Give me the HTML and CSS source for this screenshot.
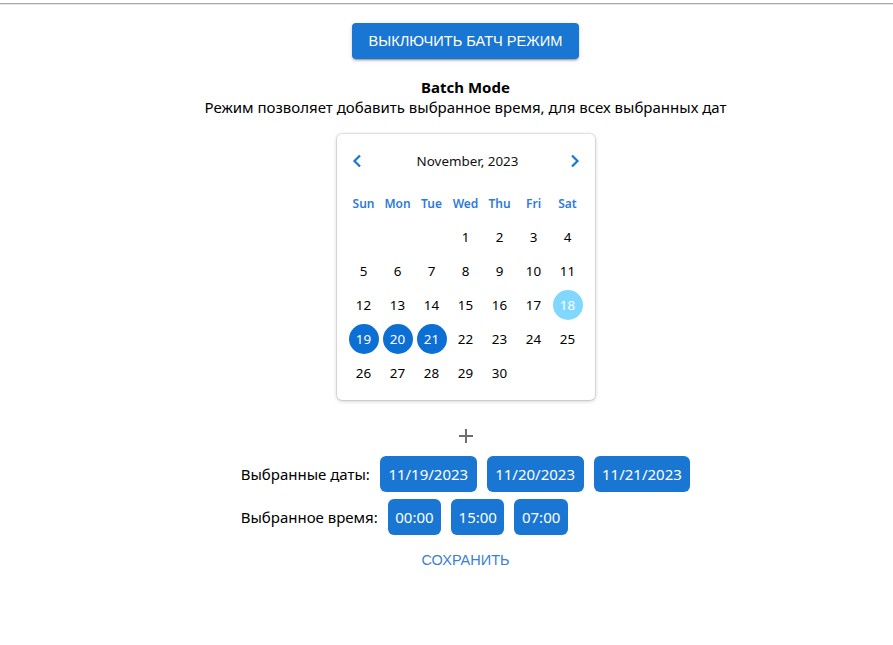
FILE: index.html
```html
<!DOCTYPE html>
<html lang="ru">
<head>
<meta charset="utf-8">
<title>Batch Mode</title>
<link rel="stylesheet" href="styles.css">
</head>
<body>
<div class="topbar"></div>
<main class="page">
  <button class="btn-primary">Выключить батч режим</button>
  <div class="title">Batch Mode</div>
  <div class="subtitle">Режим позволяет добавить выбранное время, для всех выбранных дат</div>

  <div class="calendar">
    <div class="cal-header">
      <button class="nav">
        <svg width="10" height="14" viewBox="0 0 10 14"><path d="M8 1.5 L2.5 7 L8 12.5" fill="none" stroke="#1976d2" stroke-width="2.2"/></svg>
      </button>
      <div class="month">November, 2023</div>
      <button class="nav">
        <svg width="10" height="14" viewBox="0 0 10 14"><path d="M2 1.5 L7.5 7 L2 12.5" fill="none" stroke="#1976d2" stroke-width="2.2"/></svg>
      </button>
    </div>
    <div class="grid weekdays">
      <span>Sun</span><span>Mon</span><span>Tue</span><span>Wed</span><span>Thu</span><span>Fri</span><span>Sat</span>
    </div>
    <div class="grid days">
      <span></span><span></span><span></span>
      <span class="d">1</span><span class="d">2</span><span class="d">3</span><span class="d">4</span>
      <span class="d">5</span><span class="d">6</span><span class="d">7</span><span class="d">8</span><span class="d">9</span><span class="d">10</span><span class="d">11</span>
      <span class="d">12</span><span class="d">13</span><span class="d">14</span><span class="d">15</span><span class="d">16</span><span class="d">17</span><span class="d today">18</span>
      <span class="d sel">19</span><span class="d sel">20</span><span class="d sel">21</span><span class="d">22</span><span class="d">23</span><span class="d">24</span><span class="d">25</span>
      <span class="d">26</span><span class="d">27</span><span class="d">28</span><span class="d">29</span><span class="d">30</span>
    </div>
  </div>

  <div class="plus">
    <svg width="16" height="16" viewBox="0 0 16 16"><path d="M8 1 V15 M1 8 H15" stroke="#6e6e6e" stroke-width="2"/></svg>
  </div>

  <div class="selection">
    <div class="row">
      <span class="label">Выбранные даты:</span>
      <span class="chip">11/19/2023</span>
      <span class="chip">11/20/2023</span>
      <span class="chip">11/21/2023</span>
    </div>
    <div class="row">
      <span class="label">Выбранное время:</span>
      <span class="chip time">00:00</span>
      <span class="chip time">15:00</span>
      <span class="chip time">07:00</span>
    </div>
  </div>

  <button class="btn-text">Сохранить</button>
</main>
</body>
</html>
```

FILE: styles.css
```css
* { box-sizing: border-box; }
html, body { margin: 0; padding: 0; background: #fff; }
body {
  font-family: "Noto Sans", "Open Sans", sans-serif;
  color: #000;
}
.topbar {
  height: 5px;
  border-top: 3px solid #fff;
  border-bottom: 1px solid #e6e6e6;
  background: #a9a9a9;
}
.page {
  display: flex;
  flex-direction: column;
  align-items: center;
  padding-left: 38px;
}
.btn-primary {
  margin-top: 18px;
  height: 36px;
  width: 227px;
  border: none;
  border-radius: 4px;
  background: #1976d2;
  color: #fff;
  font-family: "Liberation Sans", Arial, sans-serif;
  font-size: 14.6px;
  text-transform: uppercase;
  box-shadow: 0 3px 1px -2px rgba(0,0,0,.2), 0 2px 2px 0 rgba(0,0,0,.14), 0 1px 5px 0 rgba(0,0,0,.12);
  cursor: pointer;
}
.title {
  margin-top: 18px;
  font-weight: 700;
  font-size: 15px;
  line-height: 20px;
}
.subtitle {
  font-size: 15px;
  line-height: 21px;
}
.calendar {
  margin-top: 16px;
  width: 258px;
  padding: 11px 10px 10px;
  border-radius: 5px;
  background: #fff;
  box-shadow: 0 0 0 1px rgba(0,0,0,.08), 0 1px 4px rgba(0,0,0,.22);
}
.cal-header {
  height: 32px;
  display: flex;
  align-items: center;
  justify-content: space-between;
  margin-bottom: 9px;
}
.nav {
  width: 20px;
  height: 32px;
  padding: 0;
  border: none;
  background: none;
  display: flex;
  align-items: center;
  justify-content: center;
}
.month {
  font-size: 13.4px;
  color: #111;
  margin-left: 4px;
}
.grid {
  display: grid;
  grid-template-columns: repeat(7, 34px);
}
.grid span {
  height: 34px;
  display: flex;
  align-items: center;
  justify-content: center;
}
.weekdays span {
  font-size: 12px;
  font-weight: 600;
  color: #2f7bd8;
}
.days .d {
  font-size: 13.4px;
  color: #000;
}
.days .sel, .days .today {
  width: 30px;
  height: 30px;
  margin: 2px;
  border-radius: 50%;
  color: #fff;
}
.days .sel { background: #0b6fd4; }
.days .today { background: #80d8ff; }
.plus {
  margin-top: 28px;
  height: 16px;
  display: flex;
}
.selection {
  margin-top: 12px;
  display: flex;
  flex-direction: column;
  gap: 7px;
}
.row {
  display: flex;
  align-items: center;
  gap: 10px;
}
.label {
  font-size: 15px;
}
.chip {
  height: 36px;
  padding: 0 8.5px;
  display: flex;
  align-items: center;
  border-radius: 6px;
  background: #1976d2;
  color: #fff;
  font-size: 15px;
}
.chip.time {
  padding: 0 7.5px;
}
.btn-text {
  margin-top: 11px;
  border: none;
  background: none;
  padding: 6px 8px;
  color: #3b7fd2;
  font-family: "Liberation Sans", Arial, sans-serif;
  font-size: 14.5px;
  text-transform: uppercase;
}
```
